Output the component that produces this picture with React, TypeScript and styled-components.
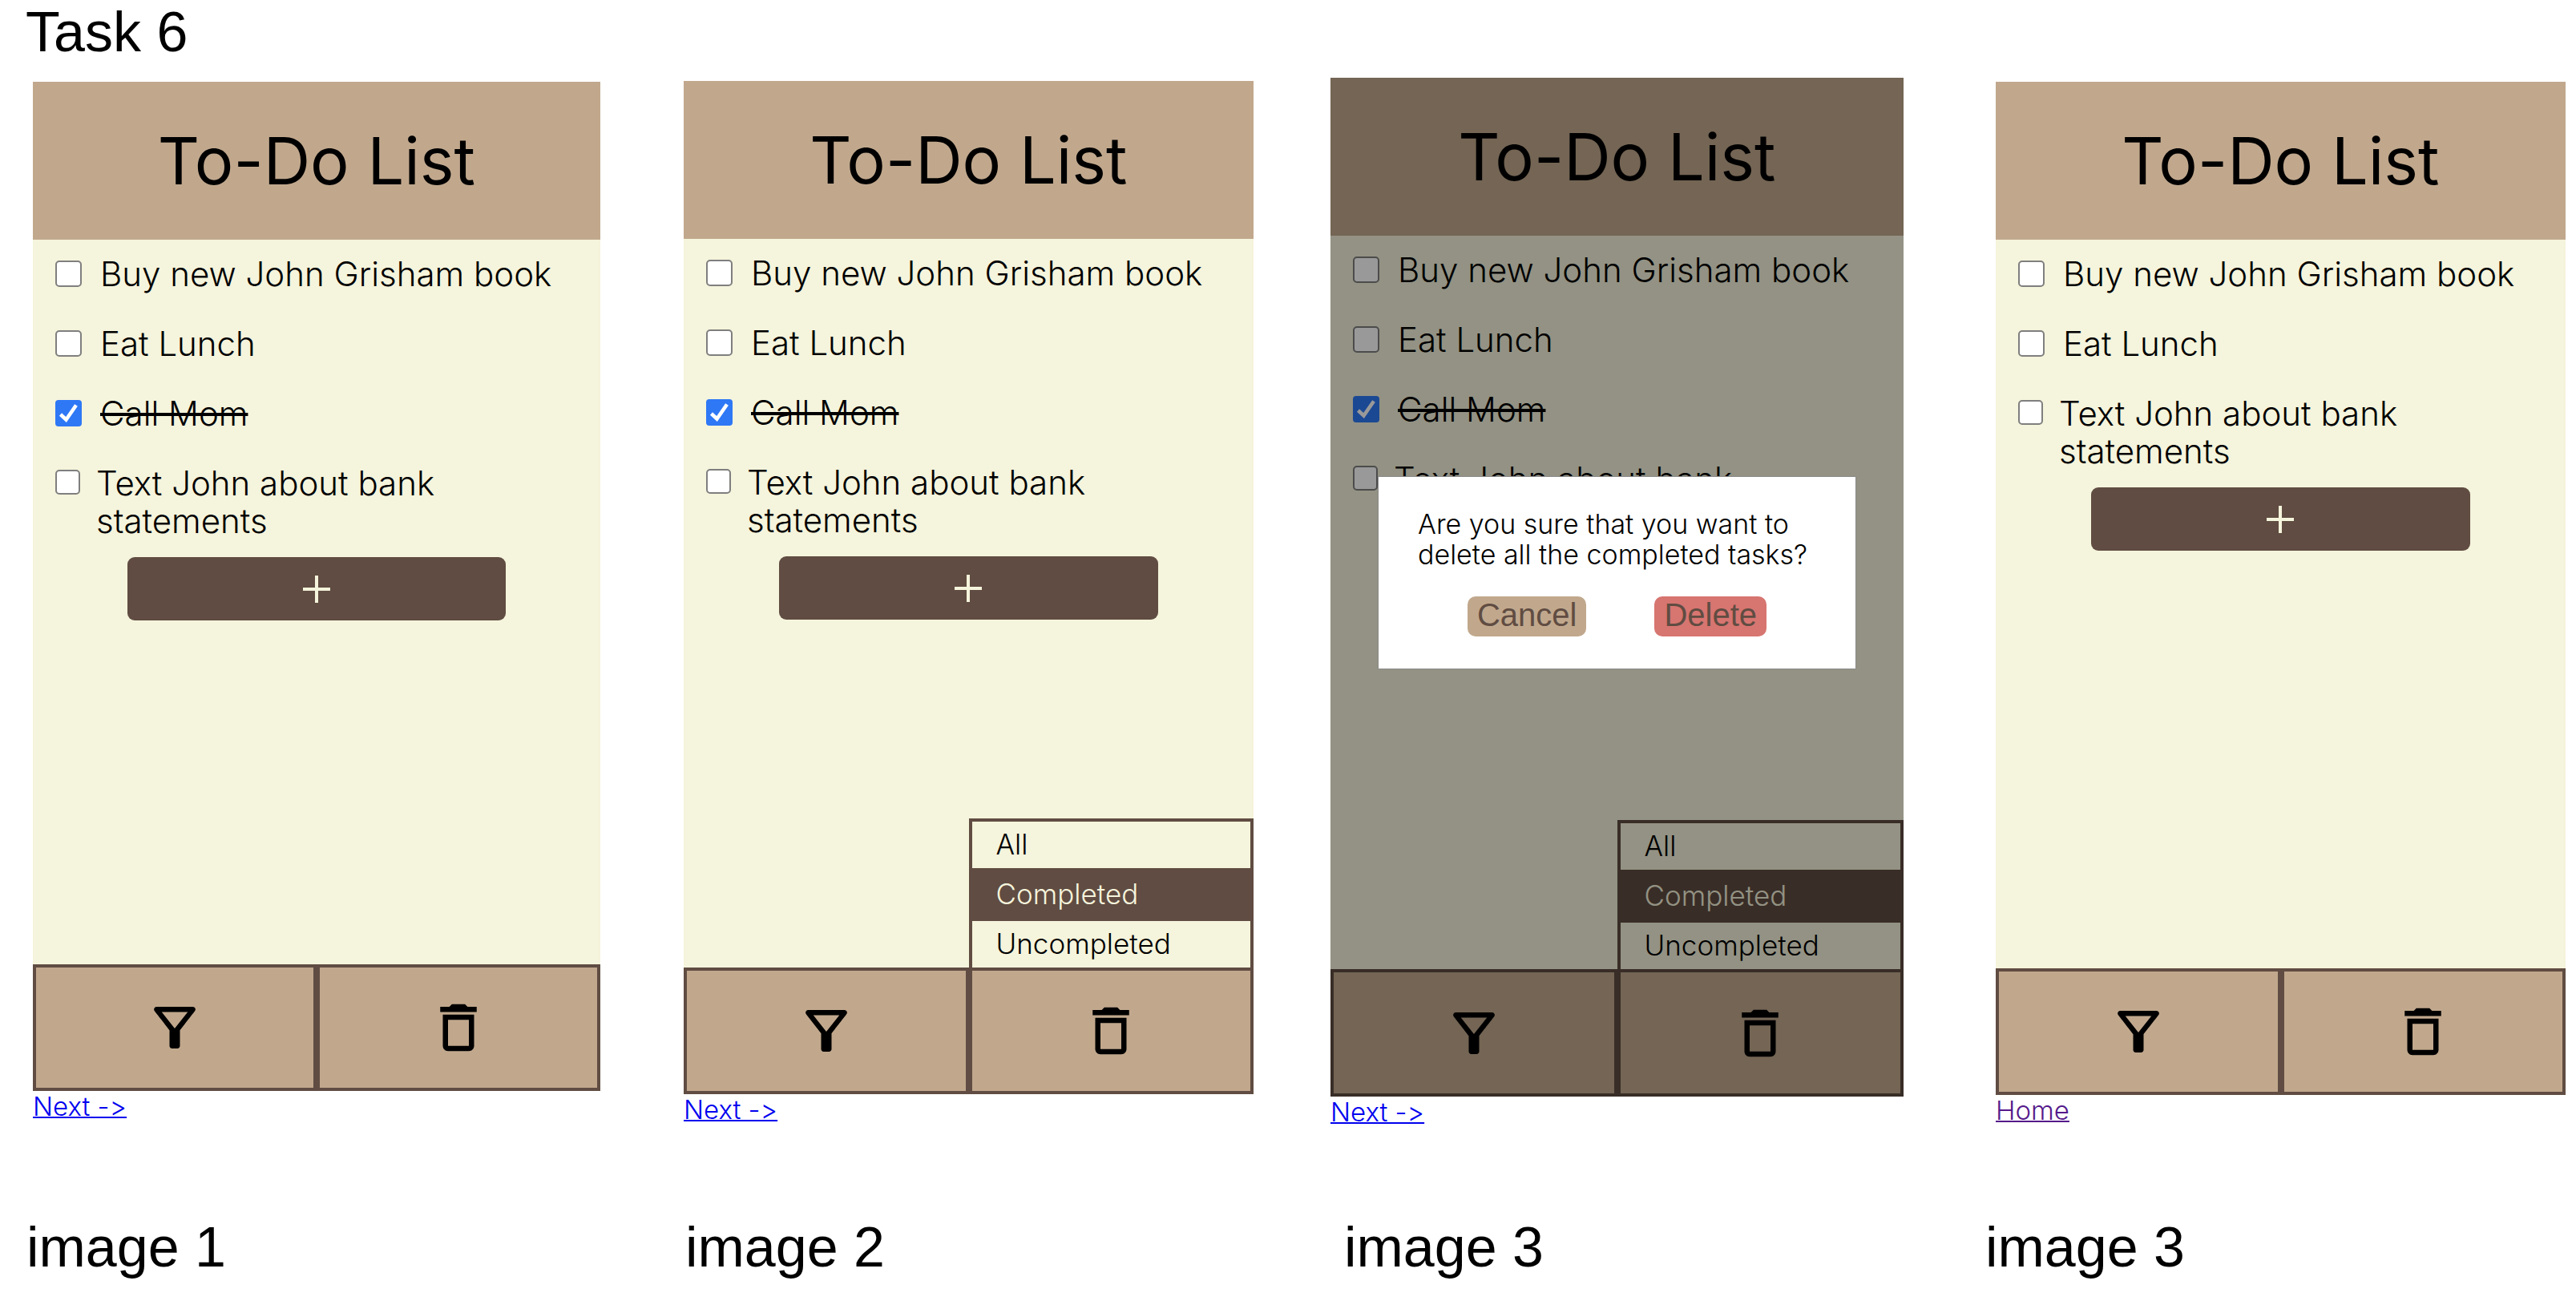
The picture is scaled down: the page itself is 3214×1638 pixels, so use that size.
import React, { useId, useState } from 'react';
import styled, { createGlobalStyle, css } from 'styled-components';

const color = {
  tan: '#c1a88d',
  brown: '#604c42',
  cream: '#f5f4dc',
  red: '#d77570',
  accent: '#2e78f6',
};

const GlobalStyle = createGlobalStyle`
  *, *::before, *::after { box-sizing: border-box; }
  body {
    margin: 0;
    background: #fff;
    color: #000;
    font-family: Inter, "Open Sans", sans-serif;
    font-weight: 300;
    font-feature-settings: "calt" 0;
  }
  button { font: inherit; color: inherit; margin: 0; cursor: pointer; }
`;

const Page = styled.main`
  display: flex;
  flex-direction: column;
`;

const labelText = css`
  margin: 0;
  font-family: "Liberation Sans", Arial, sans-serif;
  font-weight: 400;
  font-size: 70px;
  line-height: 80px;
`;

const PageTitle = styled.h1`
  ${labelText}
  padding-left: 32px;
`;

const Screens = styled.div`
  display: grid;
  grid-template-columns: 812fr 807fr 830fr 724fr;
  align-items: start;
  padding-left: 41px;
`;

const Captions = styled.div`
  display: grid;
  grid-template-columns: 822fr 822fr 800fr 737fr;
  margin-top: 110px;
  padding-left: 33px;
`;

const Caption = styled.p`
  ${labelText}
`;

const Screen = styled.section<{ $top: number; $gap: number }>`
  display: flex;
  flex-direction: column;
  align-items: flex-start;
  padding-top: ${(p) => p.$top}px;
  padding-right: ${(p) => p.$gap}px;
`;

const Phone = styled.div`
  position: relative;
  display: flex;
  flex-direction: column;
  width: 100%;
  aspect-ratio: 9 / 16;
  background: ${color.cream};
`;

const Header = styled.header`
  display: flex;
  align-items: center;
  justify-content: center;
  height: 197px;
  background: ${color.tan};
`;

const Heading = styled.h2`
  margin: 0;
  font-size: 81px;
  font-weight: 400;
  line-height: 100px;
`;

const Body = styled.div`
  display: flex;
  flex: 1;
  flex-direction: column;
  align-items: center;
  gap: 22px;
  padding-top: 19px;
`;

const TaskList = styled.ul`
  display: flex;
  flex-direction: column;
  gap: 40px;
  width: 100%;
  margin: 0;
  padding: 0 28px;
  list-style: none;
`;

const TaskRow = styled.li<{ $long: boolean }>`
  display: flex;
  align-items: flex-start;
  gap: ${(p) => (p.$long ? 20 : 23)}px;
`;

const CheckBox = styled.input<{ $long: boolean }>`
  flex: none;
  width: ${(p) => (p.$long ? 31 : 33)}px;
  height: ${(p) => (p.$long ? 31 : 33)}px;
  margin: 7px 0 0;
  border: 2px solid #7f7f7f;
  border-radius: 5px;
  appearance: none;
  background: #fff;

  &:checked {
    border: 0;
    border-radius: 4px;
    background: ${color.accent}
      url("data:image/svg+xml,%3Csvg xmlns='http://www.w3.org/2000/svg' viewBox='0 0 33 33'%3E%3Cpath d='M6.5 18l7 6.5L26 6.5' fill='none' stroke='white' stroke-width='4.5'/%3E%3C/svg%3E")
      center / 100% no-repeat;
  }
`;

const TaskLabel = styled.label<{ $done: boolean }>`
  font-size: 42px;
  line-height: 47px;
  text-decoration: ${(p) => (p.$done ? 'line-through' : 'none')};
  text-decoration-thickness: 4px;
`;

const AddButton = styled.button`
  display: flex;
  align-items: center;
  justify-content: center;
  width: 66.6%;
  height: 79px;
  border: 0;
  border-radius: 9px;
  background: ${color.brown};
  color: ${color.cream};
`;

const Toolbar = styled.nav`
  position: relative;
  display: flex;
  height: 12.5%;
`;

const ToolButton = styled.button`
  display: flex;
  flex: 1;
  align-items: center;
  justify-content: center;
  padding: 0;
  border: 4px solid ${color.brown};
  background: ${color.tan};
`;

const FilterMenu = styled.div`
  position: absolute;
  right: 0;
  bottom: 100%;
  display: flex;
  flex-direction: column;
  gap: 4px;
  width: 50%;
  padding: 4px 4px 0;
  background: ${color.brown};
`;

const FilterOption = styled.button<{ $active: boolean }>`
  height: 58px;
  padding: 0 30px 2px;
  border: 0;
  background: ${(p) => (p.$active ? color.brown : color.cream)};
  color: ${(p) => (p.$active ? color.cream : '#000')};
  font-size: 35px;
  line-height: 40px;
  text-align: left;
`;

const Overlay = styled.div`
  position: absolute;
  inset: 0;
  display: flex;
  align-items: center;
  justify-content: center;
  padding-bottom: 36px;
  background: rgba(0, 0, 0, 0.4);
`;

const Dialog = styled.div`
  width: 83.5%;
  padding: 40px 0;
  border: 1px solid #8a8a8a;
  background: #fff;
`;

const DialogText = styled.p`
  margin: 0 0 33px;
  padding: 0 30px 0 49px;
  font-size: 34px;
  line-height: 38px;
`;

const DialogActions = styled.div`
  display: flex;
  justify-content: center;
  gap: 85px;
`;

const DialogButton = styled.button<{ $danger?: boolean }>`
  height: 50px;
  padding: 0 12px 3px;
  border: 0;
  border-radius: 10px;
  background: ${(p) => (p.$danger ? color.red : color.tan)};
  color: ${color.brown};
  font-family: "Liberation Sans", Arial, sans-serif;
  font-size: 40px;
  font-weight: 400;
  line-height: 47px;
`;

const NavLink = styled.a<{ $visited?: boolean }>`
  color: ${(p) => (p.$visited ? '#551a8b' : '#0000ee')};
  font-size: 33px;
  line-height: 38px;
  text-decoration-thickness: 2px;
`;

const PlusIcon = () => (
  <svg width="34" height="34" viewBox="0 0 34 34" aria-hidden="true">
    <path d="M17 0v34M0 17h34" stroke="currentColor" strokeWidth="4" fill="none" />
  </svg>
);

const FilterIcon = () => (
  <svg width="78" height="78" viewBox="0 0 24 24" fill="currentColor" aria-hidden="true">
    <path d="M7 6h10l-5.01 6.3L7 6zm-2.75-.39C6.27 8.2 10 13 10 13v6c0 .55.45 1 1 1h2c.55 0 1-.45 1-1v-6s3.72-4.8 5.74-7.39A.998.998 0 0 0 18.95 4H5.04c-.83 0-1.3.95-.79 1.61z" />
  </svg>
);

const TrashIcon = () => (
  <svg width="78" height="78" viewBox="0 0 24 24" fill="currentColor" aria-hidden="true">
    <path d="M6 19c0 1.1.9 2 2 2h8c1.1 0 2-.9 2-2V7H6v12zM8 9h8v10H8V9zm7.5-5l-1-1h-5l-1 1H5v2h14V4h-3.5z" />
  </svg>
);

type TaskData = { text: string; done?: boolean; long?: boolean };

const buyBook: TaskData = { text: 'Buy new John Grisham book' };
const eatLunch: TaskData = { text: 'Eat Lunch' };
const callMom: TaskData = { text: 'Call Mom', done: true };
const textJohn: TaskData = { text: 'Text John about bank statements', long: true };
const allTasks = [buyBook, eatLunch, callMom, textJohn];

type ScreenData = {
  top: number;
  gap: number;
  tasks: TaskData[];
  menu?: boolean;
  dialog?: boolean;
  home?: boolean;
};

const screens: ScreenData[] = [
  { top: 22, gap: 104, tasks: allTasks },
  { top: 21, gap: 96, tasks: allTasks, menu: true },
  { top: 17, gap: 115, tasks: allTasks, menu: true, dialog: true },
  { top: 22, gap: 13, tasks: [buyBook, eatLunch, textJohn], home: true },
];

const captions = ['image 1', 'image 2', 'image 3', 'image 3'];
const filters = ['All', 'Completed', 'Uncompleted'];

function Task({ task }: { task: TaskData }) {
  const id = useId();
  const [done, setDone] = useState(Boolean(task.done));
  const long = Boolean(task.long);
  return (
    <TaskRow $long={long}>
      <CheckBox
        id={id}
        type="checkbox"
        $long={long}
        checked={done}
        onChange={(e) => setDone(e.target.checked)}
      />
      <TaskLabel htmlFor={id} $done={done}>
        {task.text}
      </TaskLabel>
    </TaskRow>
  );
}

function TodoScreen({ screen }: { screen: ScreenData }) {
  return (
    <Screen $top={screen.top} $gap={screen.gap}>
      <Phone>
        <Header>
          <Heading>To-Do List</Heading>
        </Header>
        <Body>
          <TaskList>
            {screen.tasks.map((task) => (
              <Task key={task.text} task={task} />
            ))}
          </TaskList>
          <AddButton type="button" aria-label="Add task">
            <PlusIcon />
          </AddButton>
        </Body>
        <Toolbar>
          <ToolButton type="button" aria-label="Filter tasks">
            <FilterIcon />
          </ToolButton>
          <ToolButton type="button" aria-label="Delete tasks">
            <TrashIcon />
          </ToolButton>
          {screen.menu && (
            <FilterMenu>
              {filters.map((name) => (
                <FilterOption key={name} type="button" $active={name === 'Completed'}>
                  {name}
                </FilterOption>
              ))}
            </FilterMenu>
          )}
        </Toolbar>
        {screen.dialog && (
          <Overlay>
            <Dialog role="dialog" aria-modal="true">
              <DialogText>Are you sure that you want to delete all the completed tasks?</DialogText>
              <DialogActions>
                <DialogButton type="button">Cancel</DialogButton>
                <DialogButton type="button" $danger>
                  Delete
                </DialogButton>
              </DialogActions>
            </Dialog>
          </Overlay>
        )}
      </Phone>
      <NavLink href="#" $visited={screen.home}>
        {screen.home ? 'Home' : 'Next ->'}
      </NavLink>
    </Screen>
  );
}

export default function App() {
  return (
    <Page>
      <GlobalStyle />
      <PageTitle>Task 6</PageTitle>
      <Screens>
        {screens.map((screen, i) => (
          <TodoScreen key={i} screen={screen} />
        ))}
      </Screens>
      <Captions>
        {captions.map((text, i) => (
          <Caption key={i}>{text}</Caption>
        ))}
      </Captions>
    </Page>
  );
}
